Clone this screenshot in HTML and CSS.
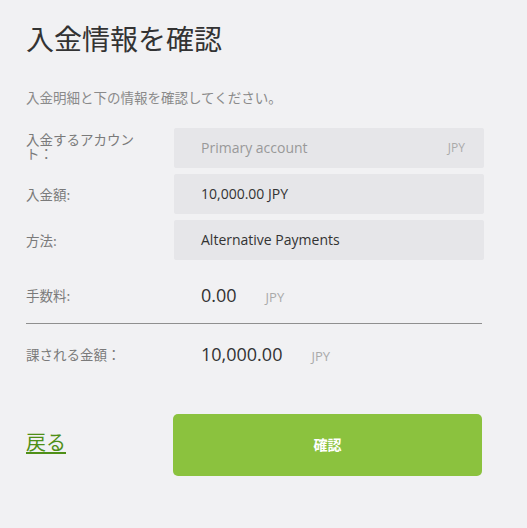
FILE: index.html
```html
<!DOCTYPE html>
<html lang="ja">
<head>
<meta charset="utf-8">
<title>入金情報を確認</title>
<link rel="stylesheet" href="styles.css">
</head>
<body>
<main class="page">
  <h1 class="title">入金情報を確認</h1>
  <p class="intro">入金明細と下の情報を確認してください。</p>

  <div class="fields">
    <div class="label label-tight">入金するアカウント：</div>
    <div class="box box-muted"><span>Primary account</span><span class="cur">JPY</span></div>

    <div class="label">入金額:</div>
    <div class="box"><span>10,000.00 JPY</span></div>

    <div class="label">方法:</div>
    <div class="box"><span>Alternative Payments</span></div>
  </div>

  <div class="sum sum-fee">
    <div class="label">手数料:</div>
    <div class="amount"><span class="num">0.00</span><span class="unit">JPY</span></div>
  </div>
  <hr class="divider">
  <div class="sum sum-total">
    <div class="label">課される金額：</div>
    <div class="amount"><span class="num">10,000.00</span><span class="unit">JPY</span></div>
  </div>

  <div class="actions">
    <a class="back" href="#">戻る</a>
    <button class="confirm" type="button">確認</button>
  </div>
</main>
</body>
</html>
```
FILE: styles.css
```css
html, body {
  margin: 0;
  padding: 0;
  background: #f1f1f3;
}
body {
  font-family: "Open Sans", "Noto Sans CJK JP", sans-serif;
  color: #333;
}
.page {
  width: 458px;
  padding: 21px 0 0 26px;
}
.title {
  margin: 0;
  font-family: "Noto Sans CJK JP", sans-serif;
  font-weight: 400;
  font-size: 28px;
  line-height: 34px;
  color: #333;
}
.intro {
  margin: 32px 0 0;
  font-family: "Noto Sans CJK JP", sans-serif;
  font-size: 13.5px;
  line-height: 20px;
  color: #8a8a8a;
}
.fields {
  margin-top: 21px;
  display: grid;
  grid-template-columns: 148px 1fr;
  row-gap: 6px;
  align-items: center;
}
.label {
  font-family: "Noto Sans CJK JP", sans-serif;
  font-size: 13.5px;
  line-height: 18px;
  color: #7a7a7a;
  padding-right: 28px;
}
.label-tight {
  line-height: 14px;
  padding-right: 30px;
  margin-top: -5px;
}
.box {
  height: 40px;
  background: #e6e6e9;
  display: flex;
  align-items: center;
  justify-content: space-between;
  padding: 0 19px 0 27px;
  font-size: 14px;
  color: #333;
  border-radius: 2px;
}
.box span {
  margin-top: -2px;
}
.box-muted {
  color: #999;
}
.cur {
  font-size: 12px;
  color: #aaa;
}
.sum {
  display: grid;
  grid-template-columns: 148px 1fr;
  align-items: center;
  height: 32px;
}
.sum-fee {
  margin-top: 19px;
}
.amount {
  display: flex;
  align-items: baseline;
  padding-left: 27px;
}
.num {
  font-size: 18px;
  color: #333;
}
.unit {
  margin-left: 29px;
  font-size: 13px;
  color: #aaa;
}
.divider {
  margin: 12px 2px 14px 0;
  border: 0;
  border-top: 1px solid #8f8f8f;
  height: 0;
}
.actions {
  margin-top: 44px;
  display: grid;
  grid-template-columns: 147px 1fr;
  align-items: center;
}
.back {
  font-family: "Noto Sans CJK JP", sans-serif;
  font-size: 20px;
  color: #4f8f17;
  text-decoration: underline;
  text-underline-offset: 2px;
  justify-self: start;
  margin-bottom: 7px;
}
.confirm {
  height: 62px;
  margin-right: 2px;
  border: 0;
  border-radius: 5px;
  background: #8bc23e;
  color: #fff;
  font-family: "Noto Sans CJK JP", sans-serif;
  font-weight: 700;
  font-size: 14px;
  padding-bottom: 4px;
  cursor: pointer;
}
```
